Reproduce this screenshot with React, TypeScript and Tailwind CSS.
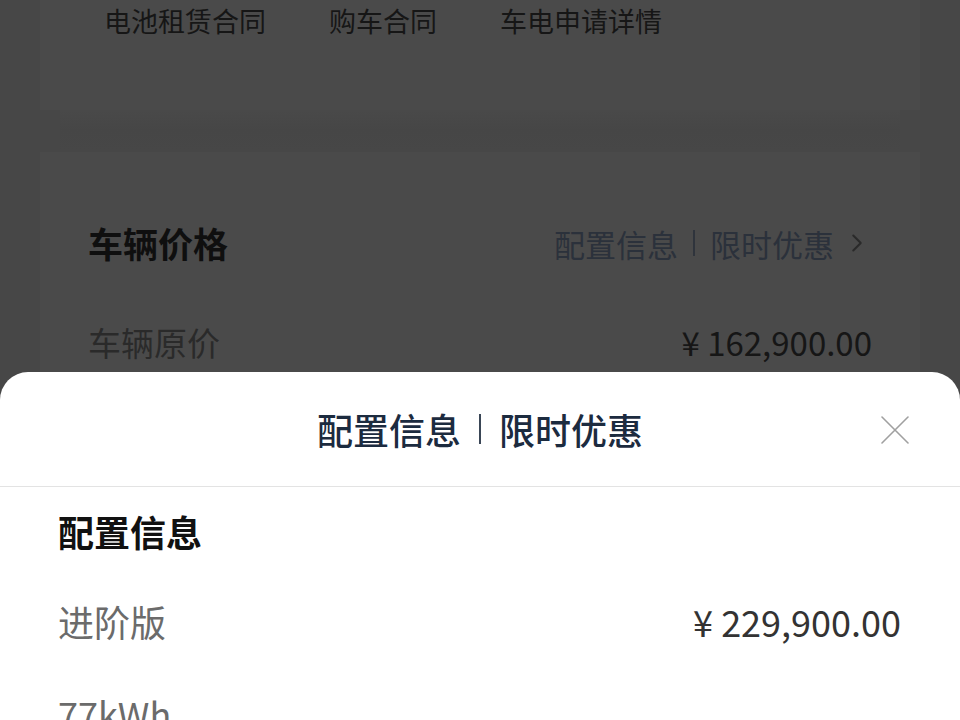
import { ChevronRight } from "lucide-react";

const tabs = ["电池租赁合同", "购车合同", "车电申请详情"];

const CloseIcon = () => (
  <svg width="28" height="28" viewBox="0 0 28 28" fill="none" stroke="currentColor" strokeWidth="1.6" strokeLinecap="round">
    <path d="M1 1L27 27M27 1L1 27" />
  </svg>
);

const PriceSheet = () => {
  return (
    <div className="absolute left-0 right-0 top-[372px] bottom-0 bg-white rounded-t-[28px] overflow-hidden">
      <div className="relative h-[115px] flex items-center justify-center border-b border-[#e3e3e3]">
        <div className="flex items-center text-[36px] font-medium text-[#1c2b3f] leading-none">
          <span>配置信息</span>
          <span className="mx-[18px] w-[2px] h-[30px] bg-[#3a4656]" />
          <span>限时优惠</span>
        </div>
        <button className="absolute right-[51px] top-[44px] text-[#a0a0a0]">
          <CloseIcon />
        </button>
      </div>

      <div className="px-[58px]">
        <div className="h-[88px] flex items-center text-[36px] font-bold text-[#111]">
          配置信息
        </div>
        <div className="h-[92px] flex items-center justify-between text-[36px]">
          <span className="text-[#6b6b6b]">进阶版</span>
          <span className="text-[#333] mr-[1px]">¥ 229,900.00</span>
        </div>
        <div className="h-[92px] flex items-center text-[36px] text-[#6b6b6b]">
          77kWh
        </div>
      </div>
    </div>
  );
};

const App = () => {
  return (
    <div
      className="relative w-[960px] h-[720px] overflow-hidden bg-[#474747]"
      style={{ fontFamily: '"Noto Sans CJK SC", "Noto Sans", sans-serif' }}
    >
      <div className="px-[40px]">
        {/* contract links card */}
        <div className="h-[110px] bg-[#4a4a4a]">
          <div className="flex h-[40px] items-center gap-[63px] pl-[64px] text-[27px] text-[#161616] leading-none">
            {tabs.map((t) => (
              <span key={t}>{t}</span>
            ))}
          </div>
        </div>

        <div className="mx-[20px] h-[42px] bg-gradient-to-b from-[#494949] via-[#464646] to-[#474747]" />

        {/* vehicle price card */}
        <div className="h-[300px] bg-[#4a4a4a] px-[48px]">
          <div className="h-[180px] flex items-center justify-between pt-[2px]">
            <span className="text-[35px] font-bold text-[#0f0f0f]">车辆价格</span>
            <span className="flex items-center text-[31px] text-[#2b313b] leading-none">
              配置信息
              <span className="mx-[15px] w-[2px] h-[26px] bg-[#2f343c]" />
              限时优惠
              <ChevronRight size={30} strokeWidth={1.6} className="ml-[8px] text-[#2a2a2a]" />
            </span>
          </div>
          <div className="flex items-center justify-between -mt-[14px]">
            <span className="text-[33px] text-[#2a2a2a]">车辆原价</span>
            <span className="text-[33px] text-[#161616]">¥ 162,900.00</span>
          </div>
        </div>
      </div>

      <PriceSheet />
    </div>
  );
};

export default App;
